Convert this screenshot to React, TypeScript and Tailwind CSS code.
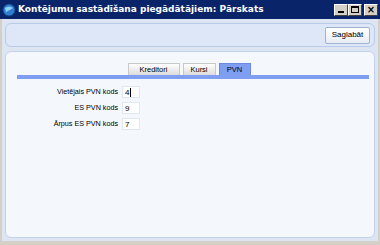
import React from "react";

const font = { fontFamily: '"DejaVu Sans", "Liberation Sans", sans-serif' };
const small = { fontFamily: '"Liberation Sans", Arial, sans-serif' };

const fields = [
  { label: "Vietējais PVN kods", value: "4", caret: true },
  { label: "ES PVN kods", value: "9" },
  { label: "Ārpus ES PVN kods", value: "7" },
];

const tabs = [
  { name: "Kreditori", w: "w-[52px]" },
  { name: "Kursi", w: "w-[33px]" },
  { name: "PVN", w: "w-[32px]" },
];

const WinButton = ({ children }: { children: React.ReactNode }) => (
  <div className="w-[14px] h-[12px] bg-[#d4d0c8] border border-t-white border-l-white border-r-[#404040] border-b-[#404040] flex items-center justify-center text-black">
    {children}
  </div>
);

export default function App() {
  return (
    <div className="w-[380px] h-[245px] bg-[#d4d0c8] flex flex-col overflow-hidden" style={font}>
      {/* title bar */}
      <div className="h-[19px] bg-[#0a246a] flex items-center pl-[2px] pr-[2px] shrink-0">
        <svg width="14" height="14" viewBox="0 0 14 14" className="shrink-0">
          <circle cx="7" cy="7" r="6" fill="#2f7fd0" />
          <path d="M3 5 Q7 2 11 5 Q8 7 4 9 Z" fill="#8fd0f5" />
          <circle cx="7" cy="7" r="6" fill="none" stroke="#0c3f80" strokeWidth="0.8" />
        </svg>
        <span className="ml-[2px] text-white font-bold text-[9px] leading-none whitespace-nowrap">
          Kontējumu sastādīšana piegādātājiem: Pārskats
        </span>
        <div className="ml-auto flex gap-0">
          <WinButton>
            <div className="w-[6px] h-[2px] bg-black mt-[5px]" />
          </WinButton>
          <WinButton>
            <div className="w-[8px] h-[7px] border border-black border-t-2" />
          </WinButton>
          <div className="ml-[2px]">
            <WinButton>
              <span className="text-[10px] font-bold leading-none">×</span>
            </WinButton>
          </div>
        </div>
      </div>

      {/* body */}
      <div className="flex-1 mx-[2px] mb-[4px] bg-[#dde5f3] flex flex-col px-[3px] pt-[4px] pb-[3px] gap-[4px]">
        {/* toolbar */}
        <div className="h-[24px] rounded-[6px] border border-[#b9cbea] bg-[#dde7f7] flex items-center justify-end pr-[4px]">
          <button
            className="h-[17px] w-[45px] rounded-[2px] border border-[#9fb2d2] bg-gradient-to-b from-white to-[#e8edf5] text-[8px] text-black leading-none"
            style={small}
          >
            Saglabāt
          </button>
        </div>

        {/* main panel */}
        <div className="flex-1 rounded-[6px] border border-[#c3d2ec] bg-[#f4f7fc] flex flex-col pt-[11px] pl-[11px] pr-[5px]" style={small}>
          <div className="flex justify-center gap-[3px] h-[12px] pr-[8px]">
            {tabs.map((t) => (
              <div
                key={t.name}
                className={
                  t.name === "PVN"
                    ? `${t.w} bg-[#7f9ef2] border border-[#6b89e0] border-b-0 text-[7.5px] leading-[11px] text-center text-black`
                    : `${t.w} bg-gradient-to-b from-white to-[#dcdcdc] border border-[#c8c8c8] border-b-0 text-[7.5px] leading-[11px] text-center text-black`
                }
              >
                {t.name}
              </div>
            ))}
          </div>
          <div className="h-[4px] bg-[#7f9ef2]" />

          <div className="flex flex-col gap-[4px] pt-[7px]">
            {fields.map((f) => (
              <div key={f.label} className="flex items-center">
                <div className="w-[105px] text-right text-[7.2px] text-black pr-[4px] leading-none whitespace-nowrap">{f.label}</div>
                <div className="w-[18px] h-[12px] bg-white border border-[#e2e6ee] text-[8px] leading-[11px] pl-[2px] text-black">
                  {f.value}
                  {f.caret && <span className="inline-block w-px h-[9px] bg-black align-middle ml-px" />}
                </div>
              </div>
            ))}
          </div>
        </div>
      </div>
    </div>
  );
}
